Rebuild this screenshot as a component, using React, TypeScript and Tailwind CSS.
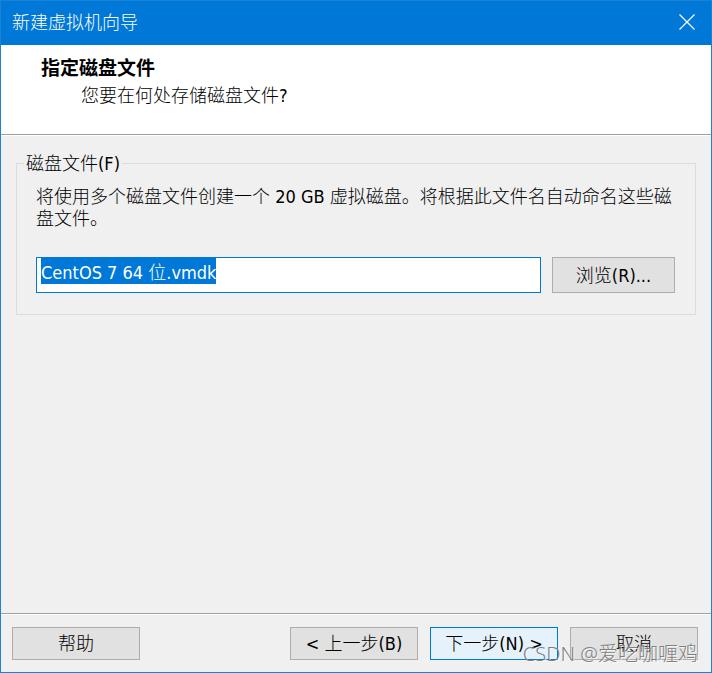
import { useEffect, useRef, useState } from "react";
import type { ReactNode } from "react";

function DialogButton({ children, primary = false }: { children: ReactNode; primary?: boolean }) {
  return (
    <button
      type="button"
      className={
        primary
          ? "h-[33px] w-32 border border-[#0078d7] bg-[#e5f1fb] whitespace-pre"
          : "h-[33px] w-32 border border-[#adadad] bg-[#e1e1e1] whitespace-pre"
      }
    >
      {children}
    </button>
  );
}

export default function App() {
  const [fileName, setFileName] = useState("CentOS 7 64 位.vmdk");
  const input = useRef<HTMLInputElement>(null);

  useEffect(() => {
    input.current?.focus();
    input.current?.select();
  }, []);

  return (
    <div className="relative flex min-h-screen flex-col border border-[#1883d7] bg-[#f0f0f0] font-['DejaVu_Sans_Condensed','Noto_Sans_CJK_SC_Light','Noto_Sans_CJK_SC',sans-serif] text-[18px] leading-[22px] text-black">
      <header className="flex h-11 items-center justify-between bg-[#0078d7] pr-4 pl-[11px] text-white">
        <h1>新建虚拟机向导</h1>
        <button type="button" aria-label="关闭" className="flex size-4 items-center justify-center pb-0.5">
          <svg viewBox="0 0 16 16" className="size-4 shrink-0" fill="none" stroke="currentColor" strokeWidth="1.2">
            <path d="M0.5 0.5 15.5 15.5M15.5 0.5 0.5 15.5" />
          </svg>
        </button>
      </header>

      <section className="h-[91px] border-b border-white bg-white">
        <div className="h-[90px] border-b border-[#a0a0a0] pt-[11px] pl-10">
          <h2 className="font-['Noto_Sans_CJK_SC',sans-serif] text-[19px] font-bold">指定磁盘文件</h2>
          <p className="mt-[7px] pl-10">您要在何处存储磁盘文件?</p>
        </div>
      </section>

      <main className="flex-1 px-[15px] pt-[15px]">
        <fieldset className="border border-[#dcdcdc] pr-5 pb-[21px] pl-[19px]">
          <legend className="-ml-3 px-0.5 pt-0.5">磁盘文件(F)</legend>
          <p className="mt-[11px]">将使用多个磁盘文件创建一个 20 GB 虚拟磁盘。将根据此文件名自动命名这些磁盘文件。</p>
          <div className="mt-[27px] flex gap-[11px]">
            <input
              ref={input}
              type="text"
              aria-label="磁盘文件"
              value={fileName}
              onChange={(e) => setFileName(e.target.value)}
              className="h-9 min-w-0 flex-1 border border-[#0078d7] bg-white px-1 pb-2 outline-none selection:bg-[#0078d7] selection:text-white"
            />
            <button type="button" className="h-9 w-[123px] border border-[#adadad] bg-[#e1e1e1] pt-0.5">
              浏览(R)...
            </button>
          </div>
        </fieldset>
      </main>

      <footer className="border-t border-[#a0a0a0]">
        <div className="flex justify-between border-t border-white pt-3 pr-[13px] pb-3 pl-[11px]">
          <DialogButton>帮助</DialogButton>
          <div className="flex gap-3">
            <DialogButton>{"< 上一步(B)"}</DialogButton>
            <DialogButton primary>{"下一步(N) >"}</DialogButton>
            <DialogButton>取消</DialogButton>
          </div>
        </div>
      </footer>

      <div className="pointer-events-none absolute right-[13px] bottom-1.5 font-['Noto_Sans','Noto_Sans_CJK_SC',sans-serif] text-[20px] leading-6 font-light text-[#808080] [text-shadow:1px_1px_0_#ffffffb0]">
        CSDN @爱吃咖喱鸡
      </div>
    </div>
  );
}
